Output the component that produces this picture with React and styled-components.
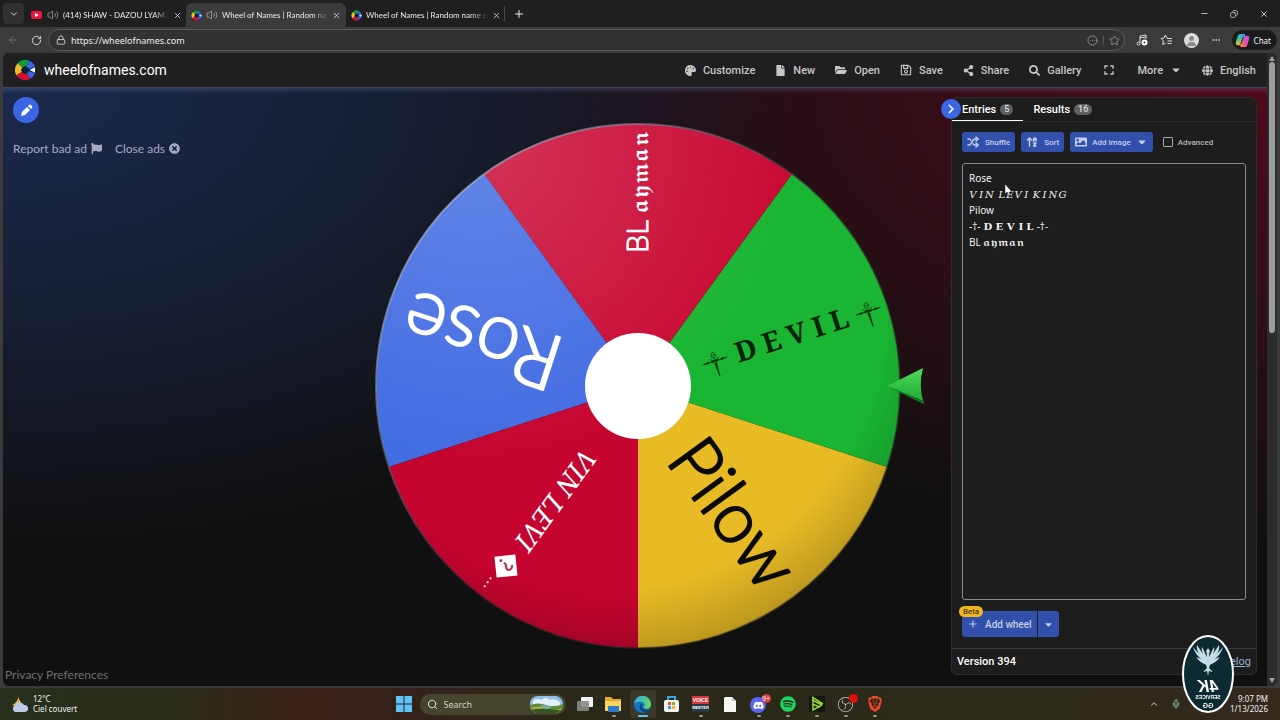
import * as React from 'react';
import styled, { createGlobalStyle, css } from 'styled-components';
import {
  FaPalette,
  FaFile,
  FaFolderOpen,
  FaRegSave,
  FaShareAlt,
  FaSearch,
  FaCaretDown,
  FaGlobe,
  FaFlag,
  FaTimesCircle,
  FaImage,
  FaDiscord,
  FaSpotify,
} from 'react-icons/fa';
import { SiObsstudio, SiBrave } from 'react-icons/si';
import { MdFullscreen, MdAdd, MdChevronRight } from 'react-icons/md';
import {
  ChevronDown,
  ChevronUp,
  Volume2,
  X,
  Plus,
  Minus,
  Copy,
  ArrowLeft,
  RotateCw,
  Lock,
  CircleEllipsis,
  Star,
  Ellipsis,
  Mic,
  Search,
  Shuffle,
  ArrowUpAZ,
} from 'lucide-react';

const GlobalStyle = createGlobalStyle`
  * {
    box-sizing: border-box;
  }

  body {
    margin: 0;
    background-color: #3b3b3b;
    font-family: Roboto, "Liberation Sans", sans-serif;
  }

  button {
    border: 0;
    padding: 0;
    background: none;
    color: inherit;
    font: inherit;
  }

  svg {
    flex: none;
  }
`;

const Desktop = styled.div`
  min-height: 100vh;
  display: flex;
  flex-direction: column;
  background-color: #3b3b3b;
`;

// browser chrome
const system = css`
  font-family: "Noto Sans", "Open Sans", sans-serif;
`;

const TabStrip = styled.div`
  height: 27px;
  display: flex;
  align-items: stretch;
  padding-left: 3px;
  background-color: #1f1f1f;
  color: #ececec;
  font-family: Lato, "Noto Sans", sans-serif;
  font-size: 8px;
`;

const TabMenu = styled.button`
  width: 21px;
  height: 21px;
  margin: 3px 2px 0 0;
  display: grid;
  place-items: center;
  border-radius: 4px;
  background-color: #303030;
`;

const Tab = styled.div`
  width: 160px;
  margin-top: 3px;
  padding: 0 5px;
  display: flex;
  align-items: center;
  gap: 4px;
  border-radius: 6px 6px 0 0;
  background-color: ${(props) => (props.$active ? '#3b3b3b' : 'transparent')};
`;

const TabTitle = styled.span`
  flex: 1;
  white-space: nowrap;
  mask-image: linear-gradient(90deg, #000 86%, transparent);
`;

const IconButton = styled.button`
  display: inline-flex;
  align-items: center;
`;

const NewTab = styled(IconButton)`
  margin: 6px 0 6px -2px;
  padding-left: 8px;
  border-left: 1px solid #4a4a4a;
`;

const WindowButtons = styled.div`
  margin-left: auto;
  padding-right: 11px;
  display: flex;
  align-items: center;
  gap: 21px;
`;

const RestoreIcon = styled(Copy)`
  transform: scaleX(-1);
`;

const Toolbar = styled.div`
  ${system}
  height: 26px;
  display: flex;
  align-items: center;
  padding: 0 3px 0 7px;
  gap: 12px;
  color: #dedede;
`;

const AddressBar = styled.label`
  flex: 1;
  height: 22px;
  display: flex;
  align-items: center;
  gap: 5px;
  padding: 0 4px 0 7px;
  margin-left: -6px;
  margin-right: -1px;
  border: 1px solid #5a5a5a;
  border-radius: 11px;
  background-color: #323232;
`;

const AddressInput = styled.input`
  ${system}
  flex: 1;
  min-width: 0;
  padding: 0;
  border: 0;
  outline: 0;
  background: none;
  color: #ededed;
  font-size: 9px;
`;

const Divider = styled.span`
  width: 1px;
  height: 9px;
  background-color: #555555;
`;

const Avatar = styled.span`
  width: 15px;
  height: 15px;
  display: grid;
  place-items: center;
  border-radius: 50%;
  background-color: #dcdcdc;
`;

const Chat = styled.button`
  height: 20px;
  display: flex;
  align-items: center;
  gap: 4px;
  margin-left: -1px;
  padding: 0 6px 0 3px;
  border-radius: 10px;
  background-color: #1b1b1b;
  color: #f2f2f2;
  font-size: 8px;
`;

// page
const Viewport = styled.div`
  flex: 1;
  display: flex;
  margin: 0 3px 2px;
  overflow: hidden;
  border-radius: 6px;
  background-color: #1d1d1d;
`;

const Page = styled.div`
  flex: 1;
  min-width: 0;
  display: flex;
  flex-direction: column;
`;

const Header = styled.header`
  height: 34px;
  display: flex;
  align-items: center;
  justify-content: space-between;
  padding: 0 11px;
  background-color: #1f1f1f;
`;

const Brand = styled.a`
  display: flex;
  align-items: center;
  gap: 8px;
  color: #ffffff;
  font-size: 14px;
  text-decoration: none;
`;

const Menu = styled.nav`
  display: flex;
  align-items: center;
  gap: 20px;
  color: #c6c6c6;
  font-size: 11px;
  font-weight: 500;
`;

const MenuButton = styled.button`
  display: flex;
  align-items: center;
  gap: 7px;
`;

const Content = styled.main`
  flex: 1;
  display: grid;
  grid-template-columns: minmax(0, 1fr) 580px minmax(0, 1fr);
  padding-left: 2px;
  border-top: 1px solid #40465c;
  background:
    linear-gradient(180deg, rgba(130, 140, 190, 0.22), transparent 6px),
    radial-gradient(ellipse 800px 460px at 0 0, #1b294e, rgba(27, 41, 78, 0.55) 50%, transparent),
    radial-gradient(ellipse 800px 460px at 100% 0, #500a1c, rgba(72, 10, 26, 0.55) 50%, transparent),
    #101010;
`;

const LeftColumn = styled.div`
  display: flex;
  flex-direction: column;
  align-items: flex-start;
  color: #a3abc4;
  font-family: Lato, sans-serif;
  font-size: 12px;
`;

const EditButton = styled.button`
  width: 26px;
  height: 26px;
  margin: 9px 0 0 8px;
  display: grid;
  place-items: center;
  border-radius: 50%;
  background-color: #3a66e4;
  color: #ffffff;
`;

const AdLinks = styled.div`
  display: flex;
  gap: 13px;
  margin: 18px 0 0 8px;
`;

const AdLink = styled.a`
  display: flex;
  align-items: center;
  gap: 4px;
  color: inherit;
  text-decoration: none;
`;

const PrivacyLink = styled.a`
  margin-top: auto;
  padding-bottom: 4px;
  color: #6f6f6f;
  text-decoration: none;
`;

const WheelSvg = styled.svg`
  align-self: center;
  width: 100%;
  overflow: visible;
`;

const SliceText = styled.text`
  font-family: ${(props) => props.$font || 'Lato, sans-serif'};
  font-size: ${(props) => props.$size}px;
  font-weight: ${(props) => props.$weight || 300};
  font-style: ${(props) => props.$slant || 'normal'};
  fill: ${(props) => props.$color};
  stroke: ${(props) => props.$color};
  stroke-width: ${(props) => props.$stroke || 0}px;
  stroke-linejoin: round;
`;

// side panel
const Panel = styled.aside`
  position: relative;
  width: 306px;
  justify-self: end;
  margin: 9px 10px 11px 0;
  display: flex;
  flex-direction: column;
  border: 1px solid #2c2c2e;
  border-radius: 6px;
  background-color: #1d1d1d;
  color: #ffffff;
`;

const CollapseButton = styled.button`
  position: absolute;
  top: 1px;
  left: -11px;
  width: 20px;
  height: 20px;
  display: grid;
  place-items: center;
  border-radius: 50%;
  background-color: #3a66e4;
`;

const Tabs = styled.div`
  display: flex;
  border-bottom: 1px solid #2a2a2a;
`;

const PanelTab = styled.button`
  height: 23px;
  display: flex;
  align-items: center;
  gap: 4px;
  padding: 0 10px;
  border-bottom: 1px solid ${(props) => (props.$active ? '#ffffff' : 'transparent')};
  font-size: 11px;
  font-weight: 500;
`;

const Count = styled.span`
  padding: 0 4px;
  border-radius: 6px;
  background-color: #5f5f5f;
  color: #dddddd;
  font-size: 9px;
  line-height: 11px;
`;

const Actions = styled.div`
  display: flex;
  align-items: center;
  gap: 6px;
  margin: 10px 10px 11px;
`;

const ActionButton = styled.button`
  height: 20px;
  display: flex;
  align-items: center;
  gap: ${(props) => props.$gap || 6}px;
  padding: 0 5px;
  border-radius: 3px;
  background-color: #3150ac;
  color: #c6cee6;
  font-size: 8px;
  font-weight: 500;
`;

const Advanced = styled.label`
  display: flex;
  align-items: center;
  gap: 5px;
  margin-left: 4px;
  color: #b9b9b9;
  font-size: 8px;
  font-weight: 500;
`;

const Checkbox = styled.input`
  appearance: none;
  width: 10px;
  height: 10px;
  margin: 0;
  border: 1px solid #a8a8a8;
  border-radius: 1px;
`;

const EntriesBox = styled.div`
  position: relative;
  flex: 1;
  display: flex;
  margin: 0 10px;
`;

const EntriesInput = styled.textarea`
  flex: 1;
  min-width: 0;
  resize: none;
  outline: 0;
  padding: 6px;
  border: 1px solid #8a8a8a;
  border-radius: 3px;
  background: none;
  color: #f2f2f2;
  font-family: "Noto Sans", "DejaVu Math TeX Gyre", "DejaVu Serif", sans-serif;
  font-size: 10px;
  line-height: 16px;
`;

const Pointer = styled.svg`
  position: absolute;
  top: 20px;
  left: 42px;
`;

const AddWheelRow = styled.div`
  position: relative;
  display: flex;
  gap: 1px;
  margin: 11px 10px;
`;

const AddWheelButton = styled.button`
  height: 26px;
  display: flex;
  align-items: center;
  gap: 6px;
  padding: 0 5px;
  border-radius: ${(props) => (props.$end ? '0 3px 3px 0' : '3px 0 0 3px')};
  background-color: #3150ac;
  color: #c6cee6;
  font-size: 10px;
  font-weight: 500;
`;

const Beta = styled.span`
  position: absolute;
  top: -5px;
  left: -3px;
  padding: 0 4px;
  border-radius: 6px;
  background-color: #f0b723;
  color: #1f1a08;
  font-size: 8px;
  line-height: 11px;
`;

const PanelFooter = styled.footer`
  height: 26px;
  display: flex;
  align-items: center;
  justify-content: space-between;
  padding: 0 5px;
  border-top: 1px solid #3c3c3c;
  font-size: 11px;
  font-weight: 500;

  a {
    color: #8fb4d8;
    font-weight: 400;
  }
`;

const Scrollbar = styled.div`
  width: 10px;
  display: flex;
  flex-direction: column;
  align-items: center;
  justify-content: space-between;
  padding: 3px 0;
  background-color: #2b2b2b;
  color: #a0a0a0;
`;

const ScrollTrack = styled.div`
  flex: 1;
  padding: 1px 0;
`;

const ScrollThumb = styled.div`
  width: 6px;
  height: 44%;
  border-radius: 3px;
  background-color: #9c9c9c;
`;

// taskbar
const Taskbar = styled.footer`
  ${system}
  height: 32px;
  display: grid;
  grid-template-columns: 1fr auto 1fr;
  align-items: center;
  padding-left: 3px;
  background: linear-gradient(90deg, #26301c, #2a2a1a 14%, #3a2019 24%, #35201a 30%, #2a2818 45%, #2b2a1a 75%, #33291c);
  color: #f0f0f0;
  font-size: 8px;
  line-height: 10px;
`;

const Weather = styled.div`
  display: flex;
  align-items: center;
  gap: 4px;
  padding-left: 8px;
`;

const Apps = styled.div`
  display: flex;
  align-items: center;
  gap: 8px;
`;

const SearchBox = styled.label`
  width: 146px;
  height: 21px;
  display: flex;
  align-items: center;
  gap: 6px;
  padding: 0 3px 0 7px;
  border-radius: 11px;
  background-color: #46442f;
`;

const SearchInput = styled.input`
  ${system}
  flex: 1;
  min-width: 0;
  padding: 0;
  border: 0;
  outline: 0;
  background: none;
  color: #ffffff;
  font-size: 9px;

  &::placeholder {
    color: #d4d2c6;
  }
`;

const AppList = styled.div`
  display: flex;
  gap: 3px;
  margin-left: -2px;
`;

const AppButton = styled.button`
  position: relative;
  width: 26px;
  height: 28px;
  display: grid;
  place-items: center;
  border-radius: 3px;
  background-color: ${(props) => (props.$active ? 'rgba(255, 255, 255, 0.08)' : 'transparent')};

  &:after {
    content: '';
    position: absolute;
    bottom: 1px;
    width: ${(props) => (props.$active ? 10 : 4)}px;
    height: 2px;
    border-radius: 1px;
    background-color: ${(props) => (props.$active ? '#60c8f4' : props.$running ? '#9a988c' : 'transparent')};
  }
`;

const Notice = styled.span`
  position: absolute;
  top: 4px;
  right: 1px;
  min-width: 9px;
  height: 9px;
  border-radius: 5px;
  background-color: ${(props) => props.$color};
  color: #ffffff;
  font-size: 7px;
  line-height: 9px;
`;

const VoiceMeeter = styled.span`
  width: 17px;
  display: block;
  background-color: #26394c;
  color: #ffffff;
  font: 700 4px/8px 'Liberation Sans', sans-serif;

  b {
    display: block;
    background-color: #d8343a;
    font-size: 5px;
  }
`;

const Tray = styled.div`
  display: flex;
  align-items: center;
  justify-content: flex-end;
  gap: 12px;
  padding-right: 12px;
`;

const Clock = styled.div`
  margin-left: 37px;
  text-align: right;
`;

const Watermark = styled.svg`
  position: fixed;
  right: 45px;
  bottom: 6px;
`;

function WheelLogo({ size }) {
  return (
    <svg width={size} height={size} viewBox="0 0 24 24" aria-hidden="true">
      <circle cx="12" cy="12" r="12" fill="#0d2240" />
      <g fill="none" strokeWidth="7">
        <path d="M6.500 7A7.500 7.500 0 0 1 15 5" stroke="#159a35" />
        <path d="M5.500 16A7.500 7.500 0 0 1 6.500 7" stroke="#efb920" />
        <path d="M16 18.500A7.500 7.500 0 0 1 5.500 16" stroke="#d50f2f" />
        <path d="M15 5A7.500 7.500 0 0 1 16 18.500" stroke="#3a66e4" />
      </g>
      <path d="M13 12L24 8v8z" fill="#0d2240" />
      <path d="M17 12l6-3v6z" fill="#fff" />
    </svg>
  );
}

const slices = [
  { fill: '#e8bb25', from: 18 },
  { fill: '#1ab533', from: -54 },
  { fill: '#c90a34', from: -126 },
  { fill: '#426ce2', from: -198 },
  { fill: '#c5042f', from: -270 },
];

function slicePath(from) {
  const point = (deg) => {
    const rad = (deg * Math.PI) / 180;
    return `${262 * Math.cos(rad)} ${262 * Math.sin(rad)}`;
  };
  return `M0 0L${point(from)}A262 262 0 0 1 ${point(from + 72)}Z`;
}

function Sword({ x }) {
  return (
    <g transform={`translate(${x} 0)`} stroke="#06320f" fill="none">
      <path d="M-13 0L-7 -1L-3 1H3L7 -1L13 0L7 1L3 -1H-3L-7 1Z" fill="#06320f" strokeWidth="0.300" />
      <path d="M-5 -3L0 0L5 -3M0 -3V0" strokeWidth="0.600" />
      <path d="M-2 -4Q-3 -8 0 -9Q3 -8 2 -4Q0 -3 -2 -4M-2 -6H2" strokeWidth="0.600" />
      <path d="M-1 2L0 16L1 2Z" fill="#06320f" strokeWidth="0.600" />
    </g>
  );
}

function Wheel() {
  const math = '"DejaVu Math TeX Gyre", "DejaVu Serif", serif';
  const serif = '"Noto Serif", "Liberation Serif", serif';
  return (
    <WheelSvg viewBox="-292 -289 580 580" role="img" aria-label="Wheel">
      <defs>
        <radialGradient id="shine" cx="0.2" cy="0.05" r="0.6">
          <stop offset="0" stopColor="#fff" stopOpacity="0.17" />
          <stop offset="1" stopColor="#fff" stopOpacity="0" />
        </radialGradient>
        <radialGradient id="shade" cx="0.44" cy="0.36" r="0.66">
          <stop offset="0.8" stopColor="#000" stopOpacity="0" />
          <stop offset="1" stopColor="#000" stopOpacity="0.2" />
        </radialGradient>
        <linearGradient id="rim" x1="0" y1="0" x2="1" y2="1">
          <stop offset="0.15" stopColor="#b4bcd4" stopOpacity="0.6" />
          <stop offset="0.5" stopColor="#2a2a2a" stopOpacity="0.5" />
        </linearGradient>
        <linearGradient id="pin" x1="0" y1="0" x2="0" y2="1">
          <stop offset="0" stopColor="#4fdc5f" />
          <stop offset="0.6" stopColor="#2dbb40" />
          <stop offset="1" stopColor="#23a838" />
        </linearGradient>
      </defs>
      {slices.map((slice) => (
        <path key={slice.from} d={slicePath(slice.from)} fill={slice.fill} />
      ))}
      <circle r="262" fill="url(#shine)" />
      <circle r="262" fill="url(#shade)" />
      <circle r="262" fill="none" stroke="url(#rim)" strokeWidth="2" />

      <g transform="rotate(-90)">
        <SliceText x="133" y="10" $size="29" $stroke="1" $color="#ffffff">BL</SliceText>
        <SliceText x="173" y="10" $font={math} $weight="400" $size="20" $color="#ffffff">𝖆𝖞𝖒𝖆𝖓</SliceText>
      </g>
      <g transform="rotate(-18)">
        <Sword x={81} />
        <SliceText x="103" y="9" $font={serif} $weight="700" $size="28" $color="#07230c">D E V I L</SliceText>
        <Sword x={242} />
      </g>
      <g transform="rotate(54)">
        <SliceText x="76" y="22" $size="71" $stroke="2" $color="#0b0a05">Pilow</SliceText>
      </g>
      <g transform="rotate(126)">
        <SliceText x="82" y="9" $font={serif} $slant="italic" $weight="400" $size="27" $color="#ffffff">VIN LEVI</SliceText>
        <rect x="213" y="-9" width="21" height="21" transform="rotate(48 224 1)" fill="#fff" />
        <SliceText x="218" y="9" $size="20" $stroke="1" $color="#b6234a">?</SliceText>
        <SliceText x="240" y="7" $size="20" $color="#ffffff">…</SliceText>
      </g>
      <g transform="rotate(198)">
        <SliceText x="81" y="22" $size="78" $stroke="2" $color="#ffffff">Rose</SliceText>
      </g>

      <circle r="53" fill="#fff" />
      <path d="M249 0L285 -18Q280 0 286 18Z" fill="url(#pin)" />
      <path d="M249 0L286 18L284 14Z" fill="#0f6d20" />
    </WheelSvg>
  );
}

function YouTubeIcon() {
  return (
    <svg width="12" height="10" viewBox="0 0 12 10" aria-hidden="true">
      <rect y="1" width="11" height="8" rx="2" fill="#f2113b" />
      <path d="M4 3v4l4-2z" fill="#fff" />
    </svg>
  );
}

function MediaIcon() {
  return (
    <svg width="12" height="12" viewBox="0 0 12 12" fill="none" stroke="currentColor" aria-hidden="true">
      <path d="M4 9V2l6-1v4M4 4l6-1" />
      <circle cx="2.500" cy="9.500" r="1.500" />
      <circle cx="8.500" cy="8.500" r="2" stroke="#fff" strokeWidth="2" />
    </svg>
  );
}

function FavoritesIcon() {
  return (
    <svg width="12" height="12" viewBox="0 0 12 12" fill="none" stroke="currentColor" aria-hidden="true">
      <path d="M7 4L5.500 1 4 4 1 4.500 3.300 6.800 2.700 10.500 5.500 9M7 4.500h5M7.500 7h4.500M7.500 9.500h4" />
    </svg>
  );
}

function PencilIcon() {
  return (
    <svg width="13" height="13" viewBox="0 0 13 13" fill="#fff" aria-hidden="true">
      <path d="M1 12l1-4 5-5 3 3-5 5zM8 2l1-1q1-1 2.500 .500T12 4l-1 1z" />
    </svg>
  );
}

function CopilotIcon() {
  return (
    <svg width="15" height="15" viewBox="0 0 16 16" aria-hidden="true">
      <defs>
        <linearGradient id="cp1" x1="0" y1="0" x2="0" y2="1">
          <stop offset="0" stopColor="#28a7f0" />
          <stop offset="0.5" stopColor="#45c789" />
          <stop offset="1" stopColor="#f5c02c" />
        </linearGradient>
        <linearGradient id="cp2" x1="1" y1="0" x2="0" y2="1">
          <stop offset="0" stopColor="#a55bf0" />
          <stop offset="0.6" stopColor="#f0539a" />
          <stop offset="1" stopColor="#fb8b4a" />
        </linearGradient>
      </defs>
      <path d="M5 1h5q1 0 1 2L8 12q-1 1-2 1H3q-3 0-2-4l2-6q1-2 2-2z" fill="url(#cp1)" />
      <path d="M11 15H6q-1 0 0-2l2-8q1-2 3-2h2q3 0 2 4l-2 6q-1 2-2 2z" fill="url(#cp2)" />
      <path d="M9 4L6 12" stroke="#1b1b1b" strokeWidth="1" />
    </svg>
  );
}

function WeatherIcon() {
  return (
    <svg width="18" height="16" viewBox="0 0 18 16" aria-hidden="true">
      <path d="M8 0q-1 3 2 6l-5 4-4-1q5-2 7-9z" fill="#e9b542" />
      <path d="M4 16a4 4 0 0 1 0-7 5 5 0 0 1 9 0 3.500 3.500 0 0 1 1 7z" fill="#bccbea" />
    </svg>
  );
}

function WindowsIcon() {
  return (
    <svg width="16" height="16" viewBox="0 0 16 16" fill="#5cc5f5" aria-hidden="true">
      <path d="M0 0h7.500v7.500H0zM8.500 0H16v7.500H8.500zM0 8.500h7.500V16H0zM8.500 8.500H16V16H8.500z" />
    </svg>
  );
}

function Landscape() {
  return (
    <svg width="33" height="17" viewBox="0 0 33 17" aria-hidden="true">
      <clipPath id="land"><rect width="33" height="17" rx="8" /></clipPath>
      <g clipPath="url(#land)">
        <rect width="33" height="17" fill="#8fc0ea" />
        <path d="M3 5q4-4 8-1 5-4 9 0 5-2 10 2v4H3z" fill="#e4eef6" />
        <path d="M0 9q8-3 16 0t17-1v9H0z" fill="#5d8a35" />
        <path d="M0 12q10-3 18 0t15 0v5H0z" fill="#a3ac45" />
        <path d="M10 10q6-2 12 1l-6 2z" fill="#76aeb8" />
        <path d="M0 14q15-3 33 1v2H0z" fill="#36571f" />
      </g>
    </svg>
  );
}

function TaskViewIcon() {
  return (
    <svg width="18" height="16" viewBox="0 0 18 16" aria-hidden="true">
      <rect x="5" y="1" width="12" height="10" rx="1" fill="#f0f0f0" />
      <rect x="1" y="5" width="12" height="10" rx="1" fill="#8a8a86" fillOpacity="0.9" />
    </svg>
  );
}

function FolderIcon() {
  return (
    <svg width="17" height="16" viewBox="0 0 17 16" aria-hidden="true">
      <path d="M0 1h6l2 2h8v12H0z" fill="#e8ab2c" />
      <path d="M0 5h16v10H0z" fill="#fbd362" />
      <path d="M3 10h11v6H3z" fill="#2c7fc4" />
    </svg>
  );
}

function EdgeIcon() {
  return (
    <svg width="17" height="17" viewBox="0 0 24 24" aria-hidden="true">
      <defs>
        <linearGradient id="edge" x1="0" y1="0" x2="1" y2="0.4">
          <stop offset="0" stopColor="#2aa8e8" />
          <stop offset="1" stopColor="#5fd66a" />
        </linearGradient>
      </defs>
      <circle cx="12" cy="12" r="12" fill="#1672c4" />
      <path d="M0 11A12 12 0 0 1 24 12c0 4-3 6-6 6-3 0-4-1-4-3 3-4-1-7-5-7-4 0-8 1-9 3z" fill="url(#edge)" />
      <path d="M9 12c-3 5 1 11 8 11 3-1 5-3 6-5-6 3-13 1-12-5 0-2 0-2-2-1z" fill="#12407c" />
    </svg>
  );
}

function StoreIcon() {
  return (
    <svg width="17" height="17" viewBox="0 0 17 17" aria-hidden="true">
      <path d="M5 5V1h7v4" fill="none" stroke="#38a5e4" strokeWidth="2" />
      <rect x="1" y="4" width="15" height="12" rx="2" fill="#f4f4f4" />
      <path d="M5 6h3v3H5z" fill="#e8502b" />
      <path d="M9 6h3v3H9z" fill="#7bb52c" />
      <path d="M5 10h3v3H5z" fill="#2b9de0" />
      <path d="M9 10h3v3H9z" fill="#f3b51f" />
    </svg>
  );
}

function FileIcon() {
  return (
    <svg width="12" height="15" viewBox="0 0 12 15" aria-hidden="true">
      <path d="M1 0h7l4 4v11H0V1z" fill="#f7f7f4" />
      <path d="M8 0v4h4z" fill="#c9c9c4" />
    </svg>
  );
}

function StripesIcon() {
  return (
    <svg width="16" height="16" viewBox="0 0 16 16" aria-hidden="true">
      <rect width="16" height="16" fill="#15170f" />
      <path d="M3 1L14 8M3 4L13 9M3 8L11 11M4 2V14L13 9" fill="none" stroke="#8ed62f" strokeWidth="1.500" />
    </svg>
  );
}

function BirdBadge() {
  return (
    <Watermark width="54" height="80" viewBox="0 0 54 80" aria-hidden="true">
      <ellipse cx="27" cy="40" rx="25" ry="38" fill="#0b2a32" stroke="#fff" strokeWidth="2" />
      <g fill="#c4dce4">
        <path d="M26 31Q19 29 15 23L20 25Q14 20 12 13L18 20Q15 15 16 11L22 20Q20 15 21 13Q25 20 26 25Z" />
        <path d="M28 31Q35 29 39 23L34 25Q40 20 42 13L36 20Q39 15 38 11L32 20Q34 15 33 13Q29 20 28 25Z" />
        <path d="M27 14L29 17 28 20 30 28 28 34 32 38 28 37 27 42 26 37 22 38 26 34 24 28 26 20 25 17Z" />
      </g>
      <g transform="translate(54 0) scale(-1 1)" fill="#fff" fontFamily="Liberation Sans, sans-serif" fontWeight="700" textAnchor="middle">
        <text x="27" y="58" fontSize="16" fontStyle="italic">4K</text>
        <text x="27" y="65" fontSize="5">SERVICES</text>
        <text x="27" y="74" fontSize="7">GG</text>
      </g>
    </Watermark>
  );
}

function App() {
  const [entries, setEntries] = React.useState(
    'Rose\n𝑉𝐼𝑁 𝐿𝐸𝑉𝐼 𝐾𝐼𝑁𝐺\nPilow\n-†- 𝐃 𝐄 𝐕 𝐈 𝐋 -†-\nBL 𝖆𝖞𝖒𝖆𝖓'
  );

  return (
    <Desktop>
      <GlobalStyle />
      <TabStrip>
        <TabMenu aria-label="Tab actions"><ChevronDown size={10} /></TabMenu>
        <Tab>
          <YouTubeIcon />
          <Volume2 size={12} strokeWidth={1} />
          <TabTitle>(414) SHAW - DAZOU LYAM (</TabTitle>
          <IconButton aria-label="Close tab"><X size={9} /></IconButton>
        </Tab>
        <Tab $active>
          <WheelLogo size={11} />
          <Volume2 size={12} strokeWidth={1} />
          <TabTitle>Wheel of Names | Random na</TabTitle>
          <IconButton aria-label="Close tab"><X size={9} /></IconButton>
        </Tab>
        <Tab>
          <WheelLogo size={11} />
          <TabTitle>Wheel of Names | Random name p</TabTitle>
          <IconButton aria-label="Close tab"><X size={9} /></IconButton>
        </Tab>
        <NewTab aria-label="New tab"><Plus size={12} strokeWidth={2} /></NewTab>
        <WindowButtons>
          <IconButton aria-label="Minimize"><Minus size={9} /></IconButton>
          <IconButton aria-label="Restore"><RestoreIcon size={8} /></IconButton>
          <IconButton aria-label="Close"><X size={10} /></IconButton>
        </WindowButtons>
      </TabStrip>

      <Toolbar>
        <IconButton aria-label="Back"><ArrowLeft size={12} strokeWidth={2} color="#6f6f6f" /></IconButton>
        <IconButton aria-label="Reload"><RotateCw size={11} /></IconButton>
        <AddressBar>
          <Lock size={10} />
          <AddressInput aria-label="Address" defaultValue="https://wheelofnames.com" />
          <CircleEllipsis size={11} strokeWidth={2} color="#8f8f8f" />
          <Divider />
          <Star size={11} strokeWidth={2} color="#8f8f8f" />
        </AddressBar>
        <IconButton aria-label="Media"><MediaIcon /></IconButton>
        <IconButton aria-label="Favorites"><FavoritesIcon /></IconButton>
        <Avatar>
          <svg width="11" height="11" viewBox="0 0 11 11" fill="#8a8a8a" aria-hidden="true">
            <circle cx="5.500" cy="3.500" r="2.500" />
            <path d="M1 11q0-4 4.500-4T10 11z" />
          </svg>
        </Avatar>
        <IconButton aria-label="Settings"><Ellipsis size={10} /></IconButton>
        <Chat><CopilotIcon />Chat</Chat>
      </Toolbar>

      <Viewport>
        <Page>
          <Header>
            <Brand href="#"><WheelLogo size={22} />wheelofnames.com</Brand>
            <Menu>
              <MenuButton><FaPalette size={11} />Customize</MenuButton>
              <MenuButton><FaFile size={11} />New</MenuButton>
              <MenuButton><FaFolderOpen size={12} />Open</MenuButton>
              <MenuButton><FaRegSave size={12} />Save</MenuButton>
              <MenuButton><FaShareAlt size={11} />Share</MenuButton>
              <MenuButton><FaSearch size={11} />Gallery</MenuButton>
              <MenuButton aria-label="Fullscreen"><MdFullscreen size={16} /></MenuButton>
              <MenuButton>More<FaCaretDown size={12} /></MenuButton>
              <MenuButton><FaGlobe size={11} />English</MenuButton>
            </Menu>
          </Header>

          <Content>
            <LeftColumn>
              <EditButton aria-label="Edit"><PencilIcon /></EditButton>
              <AdLinks>
                <AdLink href="#">Report bad ad<FaFlag size={11} /></AdLink>
                <AdLink href="#">Close ads<FaTimesCircle size={11} /></AdLink>
              </AdLinks>
              <PrivacyLink href="#">Privacy Preferences</PrivacyLink>
            </LeftColumn>

            <Wheel />

            <Panel>
              <Tabs>
                <PanelTab $active>Entries<Count>5</Count></PanelTab>
                <PanelTab>Results<Count>16</Count></PanelTab>
              </Tabs>
              <CollapseButton aria-label="Hide panel"><MdChevronRight size={18} /></CollapseButton>
              <Actions>
                <ActionButton $gap={6}><Shuffle size={12} strokeWidth={3} />Shuffle</ActionButton>
                <ActionButton $gap={6}><ArrowUpAZ size={12} strokeWidth={3} />Sort</ActionButton>
                <ActionButton $gap={5}><FaImage size={12} />Add image<FaCaretDown size={12} /></ActionButton>
                <Advanced><Checkbox type="checkbox" />Advanced</Advanced>
              </Actions>
              <EntriesBox>
                <EntriesInput
                  aria-label="Entries"
                  spellCheck={false}
                  value={entries}
                  onChange={(e) => setEntries(e.target.value)}
                />
                <Pointer width="9" height="13" viewBox="0 0 9 13" aria-hidden="true">
                  <path d="M1 1v10l2-2 2 4 1-1-1-3h3z" fill="#fff" stroke="#222" strokeWidth="0.500" />
                </Pointer>
              </EntriesBox>
              <AddWheelRow>
                <AddWheelButton><MdAdd size={12} />Add wheel</AddWheelButton>
                <AddWheelButton $end aria-label="More wheel options"><FaCaretDown size={11} /></AddWheelButton>
                <Beta>Beta</Beta>
              </AddWheelRow>
              <PanelFooter>
                Version 394
                <a href="#">Changelog</a>
              </PanelFooter>
            </Panel>
          </Content>
        </Page>
        <Scrollbar>
          <svg width="6" height="5" viewBox="0 0 6 5" fill="currentColor" aria-hidden="true"><path d="M3 0l3 5H0z" /></svg>
          <ScrollTrack><ScrollThumb /></ScrollTrack>
          <svg width="6" height="5" viewBox="0 0 6 5" fill="currentColor" aria-hidden="true"><path d="M3 5L0 0h6z" /></svg>
        </Scrollbar>
      </Viewport>

      <Taskbar>
        <Weather>
          <WeatherIcon />
          <div>12°C<br />Ciel couvert</div>
        </Weather>
        <Apps>
          <IconButton aria-label="Start"><WindowsIcon /></IconButton>
          <SearchBox>
            <Search size={11} />
            <SearchInput aria-label="Search" placeholder="Search" />
            <Landscape />
          </SearchBox>
          <AppList>
            <AppButton aria-label="Task view"><TaskViewIcon /></AppButton>
            <AppButton aria-label="Files" $running><FolderIcon /></AppButton>
            <AppButton aria-label="Edge" $active><EdgeIcon /></AppButton>
            <AppButton aria-label="Store"><StoreIcon /></AppButton>
            <AppButton $running><VoiceMeeter><b>VOICE</b>MEETER</VoiceMeeter></AppButton>
            <AppButton aria-label="File"><FileIcon /></AppButton>
            <AppButton aria-label="Discord" $running>
              <svg width="17" height="17" viewBox="0 0 17 17"><circle cx="8" cy="9" r="8" fill="#5865f2" /><FaDiscord x="3" y="4" size={11} color="#fff" /></svg>
              <Notice $color="#d83c3e">9+</Notice>
            </AppButton>
            <AppButton aria-label="Spotify" $running><FaSpotify size={16} color="#1ed760" /></AppButton>
            <AppButton aria-label="Player" $running><StripesIcon /></AppButton>
            <AppButton aria-label="OBS" $running><SiObsstudio size={15} color="#d0d0d0" /><Notice $color="#e00b0b" /></AppButton>
            <AppButton aria-label="Brave" $running><SiBrave size={16} color="#f0462a" /></AppButton>
          </AppList>
        </Apps>
        <Tray>
          <ChevronUp size={10} />
          <Mic size={10} color="#9cc3b8" />
          <Clock>9:07 PM<br />1/13/2026</Clock>
        </Tray>
      </Taskbar>

      <BirdBadge />
    </Desktop>
  );
}

export default App;
